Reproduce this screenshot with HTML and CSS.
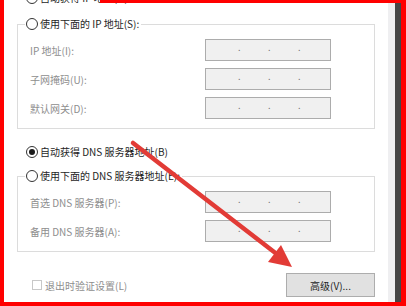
FILE: index.html
```html
<!DOCTYPE html>
<html lang="zh-CN">
<head>
<meta charset="utf-8">
<title>DNS 设置</title>
<link rel="stylesheet" href="styles.css">
</head>
<body>
<div class="frame">
  <div class="panel">
    <div class="radio-row clipped"><span class="radio"></span><span>自动获得 IP 地址(O)</span></div>
    <fieldset class="group g1">
      <legend class="radio-row legend"><span class="radio"></span><span>使用下面的 IP 地址(S):</span></legend>
      <div class="fields">
        <span class="lbl">IP 地址(I):</span>
        <div class="ipbox"><span class="seg"></span><span class="dot">.</span><span class="seg"></span><span class="dot">.</span><span class="seg"></span><span class="dot">.</span><span class="seg"></span></div>
        <span class="lbl">子网掩码(U):</span>
        <div class="ipbox"><span class="seg"></span><span class="dot">.</span><span class="seg"></span><span class="dot">.</span><span class="seg"></span><span class="dot">.</span><span class="seg"></span></div>
        <span class="lbl">默认网关(D):</span>
        <div class="ipbox"><span class="seg"></span><span class="dot">.</span><span class="seg"></span><span class="dot">.</span><span class="seg"></span><span class="dot">.</span><span class="seg"></span></div>
      </div>
    </fieldset>
    <div class="radio-row dns-auto"><span class="radio checked"></span><span>自动获得 DNS 服务器地址(B)</span></div>
    <fieldset class="group g2">
      <legend class="radio-row legend"><span class="radio"></span><span>使用下面的 DNS 服务器地址(E):</span></legend>
      <div class="fields">
        <span class="lbl">首选 DNS 服务器(P):</span>
        <div class="ipbox"><span class="seg"></span><span class="dot">.</span><span class="seg"></span><span class="dot">.</span><span class="seg"></span><span class="dot">.</span><span class="seg"></span></div>
        <span class="lbl">备用 DNS 服务器(A):</span>
        <div class="ipbox"><span class="seg"></span><span class="dot">.</span><span class="seg"></span><span class="dot">.</span><span class="seg"></span><span class="dot">.</span><span class="seg"></span></div>
      </div>
    </fieldset>
    <div class="footer">
      <div class="check"><span class="box"></span><span>退出时验证设置(L)</span></div>
      <div class="btn">高级(V)...</div>
    </div>
  </div>
  <div class="edge-light"></div>
  <div class="edge-dark"></div>
</div>
<svg class="arrow" width="406" height="306" viewBox="0 0 406 306">
  <line x1="133" y1="143" x2="278" y2="255" stroke="#e23b36" stroke-width="4.5" stroke-linecap="round"/>
  <polygon points="292,267 268,262 281,245" fill="#e23b36"/>
</svg>
</body>
</html>
```
FILE: styles.css
```css
html, body {
  margin: 0;
  padding: 0;
}
body {
  position: relative;
  width: 406px;
  height: 306px;
  overflow: hidden;
  background: #ffffff;
  font-family: "Noto Sans CJK SC", "Microsoft YaHei", sans-serif;
  font-size: 10px;
  color: #1e1e1e;
}
.frame {
  position: relative;
  display: flex;
  height: 302px;
  border-left: 4px solid #ff0000;
  border-right: 5px solid #ff0000;
  border-bottom: 4px solid #ff0000;
}
.frame::before {
  content: "";
  position: absolute;
  top: 0;
  left: 96px;
  right: -5px;
  height: 3px;
  background: #ff0000;
  z-index: 2;
}
.panel {
  width: 384px;
  height: 302px;
  overflow: hidden;
  background: #ffffff;
}
.edge-light {
  width: 7px;
  background: #efeff1;
}
.edge-dark {
  width: 6px;
  background: #464646;
}
.radio-row {
  display: flex;
  align-items: center;
  gap: 2px;
  height: 14px;
  line-height: 14px;
  white-space: nowrap;
}
.radio {
  box-sizing: border-box;
  width: 12px;
  height: 12px;
  border: 1px solid #333333;
  border-radius: 50%;
  background: #ffffff;
  display: flex;
  align-items: center;
  justify-content: center;
}
.radio.checked::after {
  content: "";
  width: 6px;
  height: 6px;
  border-radius: 50%;
  background: #1a1a1a;
}
.clipped {
  margin: -9px 0 0 22px;
}
.group {
  margin: 12px 13px 0 13px;
  padding: 0;
  min-width: 0;
  border: 1px solid #dcdcdc;
}
.legend {
  margin-left: 7px;
  padding: 0 2px 0 1px;
}
.fields {
  display: grid;
  grid-template-columns: 175px 126px;
  grid-auto-rows: 22px;
  row-gap: 7px;
  align-items: center;
  padding: 8px 0 9px 12px;
}
.lbl {
  color: #8e8e8e;
  white-space: nowrap;
}
.ipbox {
  box-sizing: border-box;
  height: 22px;
  display: flex;
  align-items: center;
  padding-left: 4px;
  border: 1px solid #acacac;
  background: #f0f0f0;
  color: #7a7a7a;
  font-size: 9px;
  line-height: 12px;
}
.seg {
  width: 28px;
}
.dot {
  width: 2px;
  text-align: center;
  margin-top: -4px;
}
.dns-auto {
  margin: 16px 0 0 22px;
}
.g2 {
  margin-top: 10px;
}
.footer {
  display: flex;
  align-items: center;
  justify-content: space-between;
  margin-top: 21px;
  padding: 0 13px 0 28px;
  height: 24px;
}
.check {
  display: flex;
  align-items: center;
  gap: 3px;
  color: #8e8e8e;
}
.box {
  box-sizing: border-box;
  width: 10px;
  height: 10px;
  border: 1px solid #c8c8c8;
  background: #ffffff;
}
.btn {
  box-sizing: border-box;
  width: 89px;
  height: 24px;
  display: flex;
  align-items: center;
  justify-content: center;
  border: 1px solid #adadad;
  background: #e1e1e1;
  color: #1e1e1e;
}
.arrow {
  position: absolute;
  top: 0;
  left: 0;
  pointer-events: none;
}
```
